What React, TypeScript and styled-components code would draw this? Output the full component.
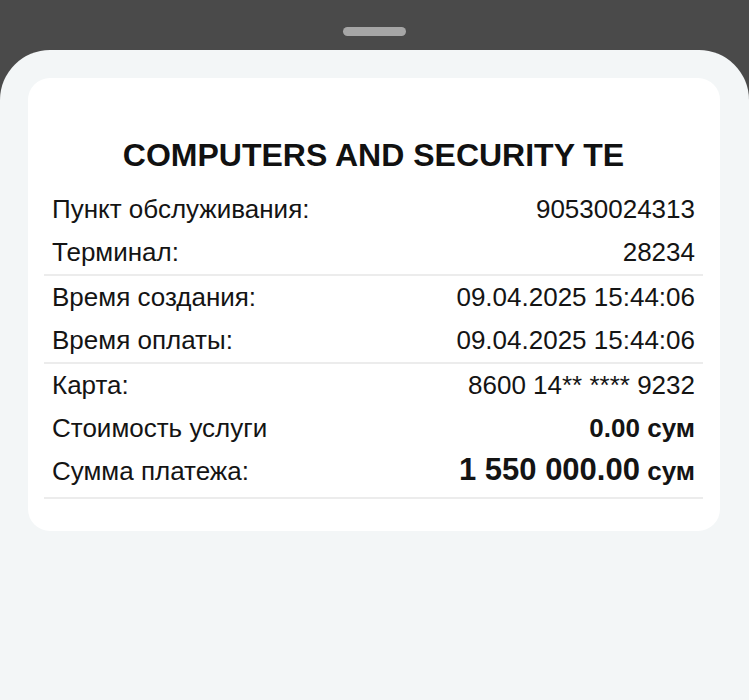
import React from "react";
import styled, { createGlobalStyle } from "styled-components";

const Global = createGlobalStyle`
  html, body { margin: 0; padding: 0; background: #4a4a4a; }
  body { font-family: "Liberation Sans", Arial, sans-serif; color: #111; }
`;

const Screen = styled.div`
  display: flex;
  flex-direction: column;
  height: 700px;
  overflow: hidden;
`;

const TopBar = styled.div`
  height: 50px;
  flex-shrink: 0;
  display: flex;
  justify-content: center;
  padding-top: 27px;
  box-sizing: border-box;
`;

const Handle = styled.div`
  width: 63px;
  height: 9px;
  border-radius: 5px;
  background: #a6a6a6;
`;

const Sheet = styled.div`
  flex: 1;
  background: #f3f6f7;
  border-radius: 50px 50px 0 0;
  padding: 28px 29px 0 28px;
`;

const Card = styled.div`
  background: #ffffff;
  border-radius: 22px;
  padding: 57px 17px 32px 16px;
`;

const Title = styled.h1`
  margin: 0 0 13px;
  text-align: center;
  font-size: 32px;
  line-height: 40px;
  font-weight: 700;
  color: #111;
  white-space: nowrap;
`;

const Group = styled.div`
  border-bottom: 2px solid #ececec;
`;

const Row = styled.div<{ $tall?: boolean }>`
  display: flex;
  justify-content: space-between;
  align-items: ${(p) => (p.$tall ? "baseline" : "center")};
  height: ${(p) => (p.$tall ? "47px" : "43px")};
  line-height: ${(p) => (p.$tall ? "40px" : "normal")};
  padding: 0 8px;
  font-size: 26px;
  white-space: nowrap;
  box-sizing: border-box;
`;

const Label = styled.span`
  color: #141414;
`;

const Value = styled.span<{ $bold?: boolean }>`
  color: #141414;
  font-weight: ${(p) => (p.$bold ? 700 : 400)};
`;

const Big = styled.span`
  font-size: 31px;
  font-weight: 700;
`;

export default function App() {
  return (
    <>
      <Global />
      <Screen>
        <TopBar>
          <Handle />
        </TopBar>
        <Sheet>
          <Card>
            <Title>COMPUTERS AND SECURITY TE</Title>
            <Group>
              <Row>
                <Label>Пункт обслуживания:</Label>
                <Value>90530024313</Value>
              </Row>
              <Row>
                <Label>Терминал:</Label>
                <Value>28234</Value>
              </Row>
            </Group>
            <Group>
              <Row>
                <Label>Время создания:</Label>
                <Value>09.04.2025 15:44:06</Value>
              </Row>
              <Row>
                <Label>Время оплаты:</Label>
                <Value>09.04.2025 15:44:06</Value>
              </Row>
            </Group>
            <Group>
              <Row>
                <Label>Карта:</Label>
                <Value>8600 14** **** 9232</Value>
              </Row>
              <Row>
                <Label>Стоимость услуги</Label>
                <Value $bold>0.00 сум</Value>
              </Row>
              <Row $tall>
                <Label>Сумма платежа:</Label>
                <Value $bold>
                  <Big>1 550 000.00</Big> сум
                </Value>
              </Row>
            </Group>
          </Card>
        </Sheet>
      </Screen>
    </>
  );
}
